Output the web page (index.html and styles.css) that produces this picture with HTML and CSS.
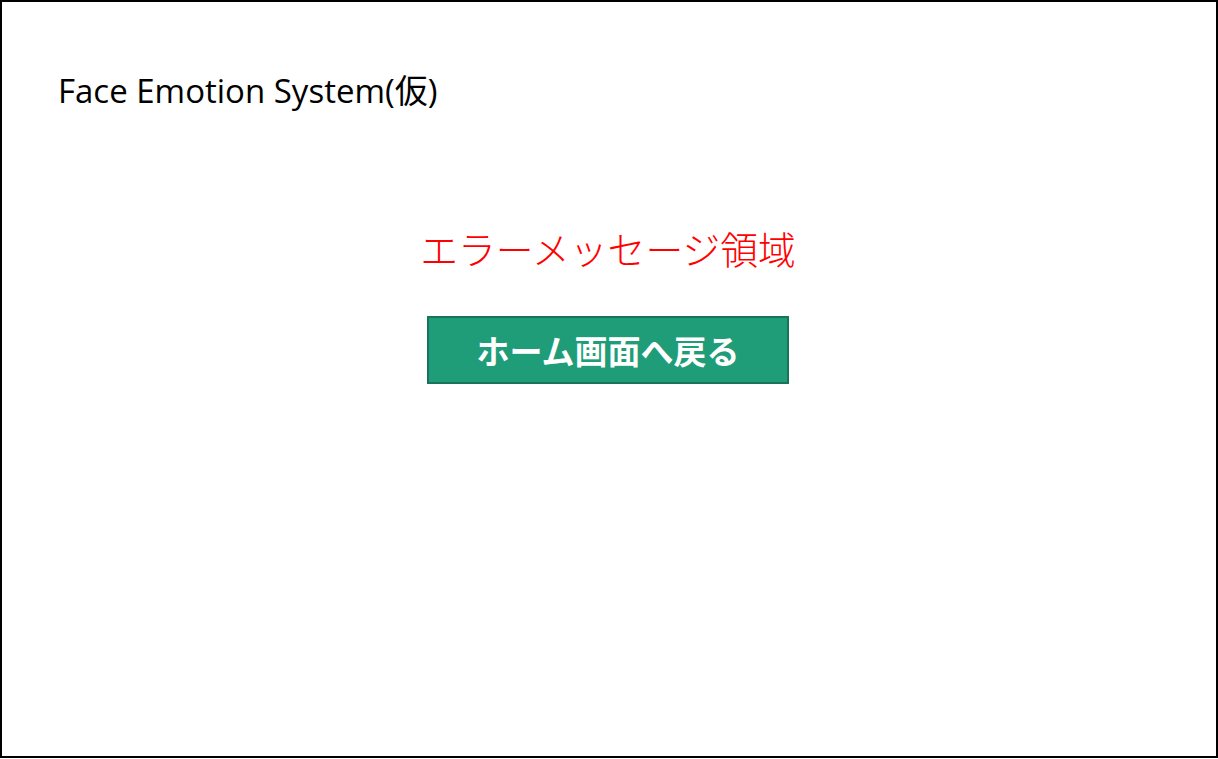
FILE: index.html
```html
<!DOCTYPE html>
<html lang="ja">
<head>
<meta charset="utf-8">
<title>Face Emotion System</title>
<link rel="stylesheet" href="styles.css">
</head>
<body>
<div class="frame">
  <header class="header">
    <h1 class="title">Face Emotion System(仮)</h1>
  </header>
  <main class="content">
    <p class="error">エラーメッセージ領域</p>
    <button class="home-btn" type="button">ホーム画面へ戻る</button>
  </main>
</div>
</body>
</html>
```

FILE: styles.css
```css
html, body {
  margin: 0;
  padding: 0;
  background: #ffffff;
}
.frame {
  box-sizing: border-box;
  width: 1218px;
  height: 758px;
  border: 2px solid #000000;
  display: flex;
  flex-direction: column;
  font-family: "Open Sans", "Noto Sans CJK JP", sans-serif;
}
.header {
  padding: 67px 0 0 56px;
}
.title {
  margin: 0;
  font-weight: 400;
  font-size: 33px;
  line-height: 44px;
  color: #000000;
}
.content {
  display: flex;
  flex-direction: column;
  align-items: center;
  padding-top: 110px;
}
.error {
  margin: 0 2px 0 0;
  font-family: "Noto Sans CJK JP", sans-serif;
  font-weight: 300;
  font-size: 37.8px;
  line-height: 50px;
  color: #ff0000;
}
.home-btn {
  margin: 43px 2px 0 0;
  box-sizing: border-box;
  width: 362px;
  height: 68px;
  background: #1f9c78;
  border: 2px solid #17735a;
  color: #ffffff;
  font-family: "Noto Sans CJK JP", sans-serif;
  font-weight: 700;
  font-size: 33px;
  padding: 0;
  cursor: pointer;
}
```
